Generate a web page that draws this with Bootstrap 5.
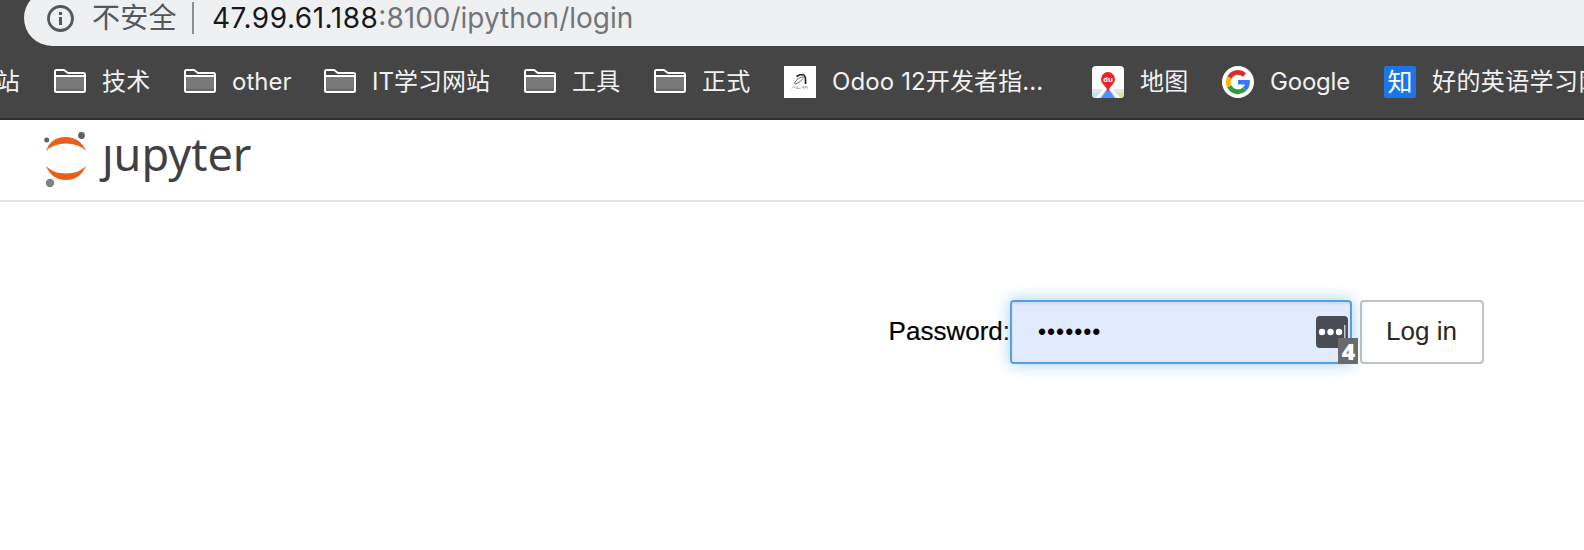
<!DOCTYPE html>
<html lang="zh-CN">
<head>
<meta charset="utf-8">
<title>Jupyter Notebook</title>
<link href="https://cdn.jsdelivr.net/npm/bootstrap@5.3.0/dist/css/bootstrap.min.css" rel="stylesheet">
<style>
body{height:550px;overflow:hidden;background:#fff;font-family:"Liberation Sans","Noto Sans CJK SC",sans-serif;font-size:26px;color:#000}
.chrome-ui{font-family:Inter,"Noto Sans CJK SC",sans-serif;background:#454545}
.omnibox-wrap{height:46px;padding-left:24px}
.omnibox{height:56px;margin-top:-10px;border-radius:28px 0 0 28px;background:#eff0f2;padding-left:23px;font-size:28px;line-height:56px;color:#71767b}
.omnibox .insecure{margin-left:17px;color:#54585d;width:85px;letter-spacing:.2px}
.omnibox .sep{width:2px;height:32px;background:#8b8e92;margin-left:15px}
.omnibox .url{margin-left:18px;letter-spacing:0}
.omnibox .host{color:#17181b;letter-spacing:.52px}
.bookmarks{height:74px;border-bottom:2px solid #303030;color:#f1f2f3;font-size:24px;line-height:32px;padding-bottom:1px}
.bm{height:32px;flex:none;margin-right:34px}
.bm svg{flex:none;margin-right:16px}
.bm .lbl{width:48px;letter-spacing:.2px}
.bm .w-cut{width:20px}
.bm .w-other{width:58px;letter-spacing:0}.bm .w-it{width:118px;letter-spacing:0}.bm .w-odoo{width:226px;letter-spacing:.12px}.bm .w-google{width:80px;letter-spacing:-.2px}.bm .w-en{width:152px;letter-spacing:.4px}
.page-head{height:82px;border-bottom:2px solid #e3e3e3;padding-left:44px}
.wordmark{font-family:"Noto Sans",sans-serif;font-size:45px;line-height:60px;color:#414042;margin:4px 0 0 16px}
.login{margin-top:98px;padding-right:100px;height:64px}
.login label{-webkit-text-stroke:.2px #000;line-height:30px;margin-top:-2px}
.pw{width:342px;height:64px;border:2px solid #579fe4;border-radius:4px;background:#e2eafd;padding:0 26px;font:23px "Liberation Sans",sans-serif;color:#000;box-shadow:inset 0 2px 2px rgba(0,0,0,.075),0 0 16px rgba(102,175,233,.6);outline:0;letter-spacing:1px}
.fill-icon{right:-6px;top:16px}
.btn-login{width:124px;height:64px;border:2px solid #c1c1c1;border-radius:4px;font-size:26px;color:#282828;background:#fff;margin-left:8px;padding:0 1px 1px 0}
</style>
</head>
<body>
<svg width="0" height="0" class="position-absolute"><defs>
<symbol id="folder" viewBox="0 0 32 32"><path d="M2 10h28v16H2Z" fill="#797979"/><path d="M2 23h28v3H2Z" fill="#686868"/><path d="M1 10h30M1 10V5.500Q1 4 2.500 4H10l4 3h15.500Q31 7 31 8.500v16q0 1.500-1.500 1.500h-27Q1 26 1 24.500Z" fill="none" stroke="#fff" stroke-width="2"/></symbol>
</defs></svg>
<header class="chrome-ui">
 <div class="omnibox-wrap overflow-hidden">
  <div class="omnibox d-flex align-items-center text-nowrap">
   <svg width="28" height="28" viewBox="0 0 28 28"><circle cx="13.500" cy="14.500" r="12" fill="none" stroke="#54585d" stroke-width="2.800"/><path d="M12 8h3v3h-3zM12 13h3v8h-3z" fill="#54585d"/></svg>
   <span class="insecure">不安全</span><span class="sep"></span>
   <span class="url"><span class="host">47.99.61.188</span>:8100/ipython/login</span>
  </div>
 </div>
 <nav class="bookmarks d-flex align-items-center text-nowrap overflow-hidden">
  <div class="bm d-flex"><span class="lbl w-cut d-flex justify-content-end">站</span></div>
  <div class="bm d-flex"><svg width="32" height="32"><use href="#folder"/></svg><span class="lbl">技术</span></div>
  <div class="bm d-flex"><svg width="32" height="32"><use href="#folder"/></svg><span class="lbl w-other">other</span></div>
  <div class="bm d-flex"><svg width="32" height="32"><use href="#folder"/></svg><span class="lbl w-it">IT学习网站</span></div>
  <div class="bm d-flex"><svg width="32" height="32"><use href="#folder"/></svg><span class="lbl">工具</span></div>
  <div class="bm d-flex"><svg width="32" height="32"><use href="#folder"/></svg><span class="lbl">正式</span></div>
  <div class="bm d-flex"><svg width="32" height="32" viewBox="0 0 32 32"><path d="M0 0h32v32H0z" fill="#fff"/><path d="M12.500 10.500Q15 8.500 19 8.500Q22 9 21.500 18" fill="none" stroke="#222" stroke-width="1.700"/><path d="M20 11q-6 0-9 5q-1.500 3 2 1.500q4-2 6-5" fill="none" stroke="#555" stroke-width=".9"/><path d="M8 22.500l2-2 1.500 2M13 20v2.500h2.500M17 22.500l2-2 1 2M21 22.500v-2q2.500-.5 2.500 2" fill="none" stroke="#999" stroke-width=".9"/></svg><span class="lbl w-odoo">Odoo 12开发者指...</span></div>
  <div class="bm d-flex"><svg width="32" height="32" viewBox="0 0 32 32"><defs><clipPath id="mapclip"><rect width="32" height="32" rx="4"/></clipPath></defs><g clip-path="url(#mapclip)"><path d="M0 0h32v32H0z" fill="#fff"/><path d="M0 23h32v9H0z" fill="#e5e5e5"/><path d="M0 27l10-1-5 6H0z" fill="#b8e4fb"/><path d="M32 27l-10-1 5 6h5z" fill="#cdeb96"/><path d="M13 23L5 32M19 23l8 9" stroke="#fff" stroke-width="2"/><path d="M16 22l7 10H9z" fill="#4794ff"/></g><path d="M16 26Q15 22 11 18A7 7 0 1 1 21 18Q17 22 16 26Z" fill="#e8252a"/><text x="16" y="16" font-family="Open Sans,sans-serif" font-size="7.500" font-weight="700" fill="#fff" text-anchor="middle">du</text></svg><span class="lbl">地图</span></div>
  <div class="bm d-flex"><svg width="32" height="32" viewBox="0 0 32 32"><circle cx="16" cy="16" r="16" fill="#fff"/><g fill="none" stroke-width="4.800"><path d="M7.400 11.500A9.700 9.700 0 0 1 22.500 8.900" stroke="#dd2c27"/><path d="M7.400 20.500A9.700 9.700 0 0 1 7.400 11.500" stroke="#fbb40b"/><path d="M7.400 20.500A9.700 9.700 0 0 0 22.200 23.500" stroke="#2e9b3e"/><path d="M22.200 23.500A9.700 9.700 0 0 0 25.600 16.200H16" stroke="#3b78f2" stroke-width="4.500"/></g></svg><span class="lbl w-google">Google</span></div>
  <div class="bm d-flex"><svg width="32" height="32" viewBox="0 0 32 32"><rect width="32" height="32" rx="2" fill="#1a76ea"/><text x="16" y="25" font-family="Noto Sans CJK SC,sans-serif" font-size="25" fill="#fff" text-anchor="middle">知</text></svg><span class="lbl w-en">好的英语学习网</span></div>
 </nav>
</header>
<div class="page-head d-flex">
 <svg width="42" height="68" viewBox="0 0 42 68"><path d="M2 31Q7 17 21.500 17T42 31Q35 23.500 22 23.500T2 31ZM2 46Q9 53.500 22 53.500T42 46Q36 60 22 60T2 46Z" fill="#e95f19"/><circle cx="2.700" cy="20" r="2.500" fill="#616262"/><circle cx="37.500" cy="15.500" r="3.400" fill="#616262"/><circle cx="6" cy="63" r="4.200" fill="#828282"/></svg>
 <span class="wordmark">ȷupyter</span>
</div>
<main class="login d-flex align-items-center justify-content-end">
 <label for="pw">Password:</label>
 <div class="position-relative">
  <input id="pw" class="pw d-block" type="password" value="1234567">
  <svg class="fill-icon position-absolute" width="42" height="48" viewBox="0 0 42 48"><rect width="32" height="32" rx="4" fill="#494b55"/><g fill="#fff"><circle cx="6" cy="16" r="3.200"/><circle cx="14.500" cy="16" r="3.200"/><circle cx="23" cy="16" r="3.200"/></g><path d="M28 9h1.500v14H28z" fill="#c6c7cb"/><path d="M22 22h20v26H22z" fill="#6b6b6b"/><text x="32.500" y="44" font-family="Open Sans,sans-serif" font-size="23" font-weight="800" fill="#fff" text-anchor="middle">4</text></svg>
 </div>
 <button class="btn btn-login">Log in</button>
</main>
<script src="https://cdn.jsdelivr.net/npm/bootstrap@5.3.0/dist/js/bootstrap.bundle.min.js"></script>
</body>
</html>
